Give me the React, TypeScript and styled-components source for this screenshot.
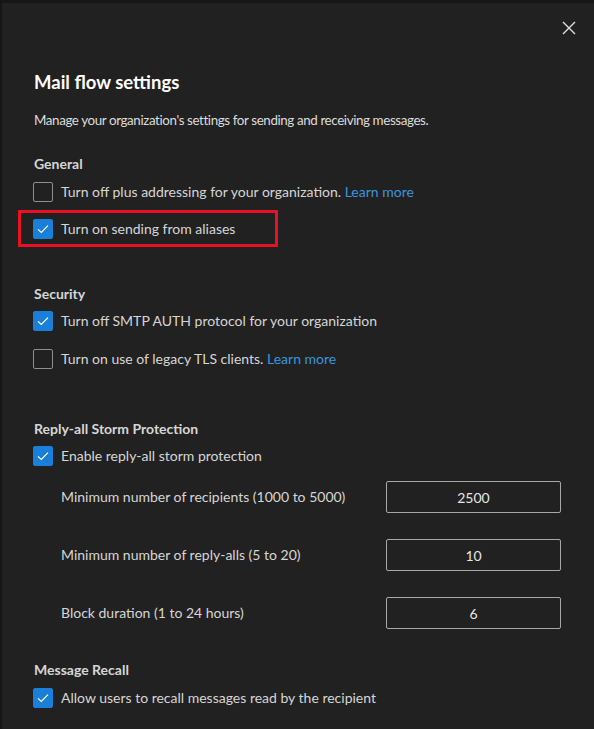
import React from 'react';
import styled, { createGlobalStyle } from 'styled-components';

const GlobalStyle = createGlobalStyle`
  html, body {
    margin: 0;
    padding: 0;
    background: #161616;
  }
  body {
    font-family: 'Segoe UI', Lato, 'Noto Sans', sans-serif;
    -webkit-font-smoothing: antialiased;
  }
`;

interface CheckOption {
  label: string;
  checked: boolean;
  link?: string;
  highlighted?: boolean;
}

interface NumberSetting {
  label: string;
  value: string;
}

const general: CheckOption[] = [
  { label: 'Turn off plus addressing for your organization.', checked: false, link: 'Learn more' },
  { label: 'Turn on sending from aliases', checked: true, highlighted: true },
];

const security: CheckOption[] = [
  { label: 'Turn off SMTP AUTH protocol for your organization', checked: true },
  { label: 'Turn on use of legacy TLS clients.', checked: false, link: 'Learn more' },
];

const stormSettings: NumberSetting[] = [
  { label: 'Minimum number of recipients (1000 to 5000)', value: '2500' },
  { label: 'Minimum number of reply-alls (5 to 20)', value: '10' },
  { label: 'Block duration (1 to 24 hours)', value: '6' },
];

const CheckRow = ({ label, checked, link, highlighted }: CheckOption) => (
  <Row $highlighted={highlighted}>
    <Box $checked={checked}>
      {checked && (
        <svg width="14" height="14" viewBox="0 0 14 14">
          <path d="M2 7.4 L5.3 10.4 L12 3.6" fill="none" stroke="#fff" strokeWidth="1.2" />
        </svg>
      )}
    </Box>
    <Label>
      {label}
      {link && <Link href="#"> {link}</Link>}
    </Label>
  </Row>
);

export default function App() {
  return (
    <>
      <GlobalStyle />
      <Panel>
        <CloseButton aria-label="Close">
          <svg width="14" height="14" viewBox="0 0 14 14">
            <path d="M1 1 L13 13 M13 1 L1 13" stroke="#e0e0e0" strokeWidth="1.4" />
          </svg>
        </CloseButton>
        <Title>Mail flow settings</Title>
        <Description>Manage your organization's settings for sending and receiving messages.</Description>

        <Section $top={24}>
          <SectionTitle>General</SectionTitle>
          <Options>
            {general.map(o => (
              <CheckRow key={o.label} {...o} />
            ))}
          </Options>
        </Section>

        <Section $top={44}>
          <SectionTitle>Security</SectionTitle>
          <Options $top={7}>
            {security.map(o => (
              <CheckRow key={o.label} {...o} />
            ))}
          </Options>
        </Section>

        <Section $top={50}>
          <SectionTitle>Reply-all Storm Protection</SectionTitle>
          <Options $top={7}>
            <CheckRow label="Enable reply-all storm protection" checked />
          </Options>
          <Fields>
            {stormSettings.map(s => (
              <FieldRow key={s.label}>
                <FieldLabel>{s.label}</FieldLabel>
                <NumberInput defaultValue={s.value} />
              </FieldRow>
            ))}
          </Fields>
        </Section>

        <Section $top={31}>
          <SectionTitle>Message Recall</SectionTitle>
          <Options>
            <CheckRow label="Allow users to recall messages read by the recipient" checked />
          </Options>
        </Section>
      </Panel>
    </>
  );
}

const Panel = styled.div`
  position: relative;
  box-sizing: border-box;
  margin: 3px 0 0 2px;
  height: 726px;
  background: #212121;
  padding: 65px 33px 0 31px;
  color: #d6d6d6;
  overflow: hidden;
`;

const CloseButton = styled.button`
  position: absolute;
  top: 14px;
  right: 14px;
  width: 22px;
  height: 22px;
  padding: 0;
  border: none;
  background: transparent;
  display: flex;
  align-items: center;
  justify-content: center;
`;

const Title = styled.h1`
  margin: 0 0 0 1px;
  font-size: 18.5px;
  line-height: 28px;
  font-weight: 700;
  color: #ffffff;
`;

const Description = styled.p`
  margin: 14px 0 0 1px;
  font-size: 13.4px;
  letter-spacing: -0.4px;
  line-height: 20px;
  color: #dcdcdc;
`;

const Section = styled.section<{ $top: number }>`
  margin-top: ${p => p.$top}px;
`;

const SectionTitle = styled.h2`
  margin: 0 0 0 1px;
  font-size: 14px;
  line-height: 20px;
  font-weight: 700;
  color: #d6d6d6;
`;

const Options = styled.div<{ $top?: number }>`
  display: flex;
  flex-direction: column;
  gap: 18px;
  margin-top: ${p => p.$top ?? 8}px;
`;

const Row = styled.div<{ $highlighted?: boolean }>`
  display: flex;
  align-items: center;
  gap: 8px;
  height: 20px;
  ${p =>
    p.$highlighted &&
    `
    width: fit-content;
    height: 31px;
    margin: -10px 0 -7px -15px;
    padding: 0 40px 0 12px;
    border: 3px solid #e81123;
  `}
`;

const Box = styled.span<{ $checked: boolean }>`
  box-sizing: border-box;
  flex: none;
  width: 20px;
  height: 20px;
  border-radius: 2px;
  display: flex;
  align-items: center;
  justify-content: center;
  background: ${p => (p.$checked ? '#1a7fd9' : 'transparent')};
  border: 1px solid ${p => (p.$checked ? '#1a7fd9' : '#8f8f8f')};
`;

const Label = styled.span`
  font-size: 14px;
  line-height: 20px;
  color: #d6d6d6;
  white-space: nowrap;
`;

const Link = styled.a`
  color: #3a96dd;
  text-decoration: none;
`;

const Fields = styled.div`
  display: flex;
  flex-direction: column;
  gap: 26px;
  margin-top: 15px;
  padding-left: 28px;
`;

const FieldRow = styled.div`
  display: flex;
  align-items: center;
  justify-content: space-between;
`;

const FieldLabel = styled.span`
  font-size: 14px;
  line-height: 20px;
  color: #d6d6d6;
`;

const NumberInput = styled.input`
  box-sizing: border-box;
  width: 175px;
  height: 32px;
  background: transparent;
  border: 1px solid #a8a8a8;
  border-radius: 2px;
  color: #e6e6e6;
  font-family: inherit;
  font-size: 14px;
  text-align: center;
  outline: none;
`;
